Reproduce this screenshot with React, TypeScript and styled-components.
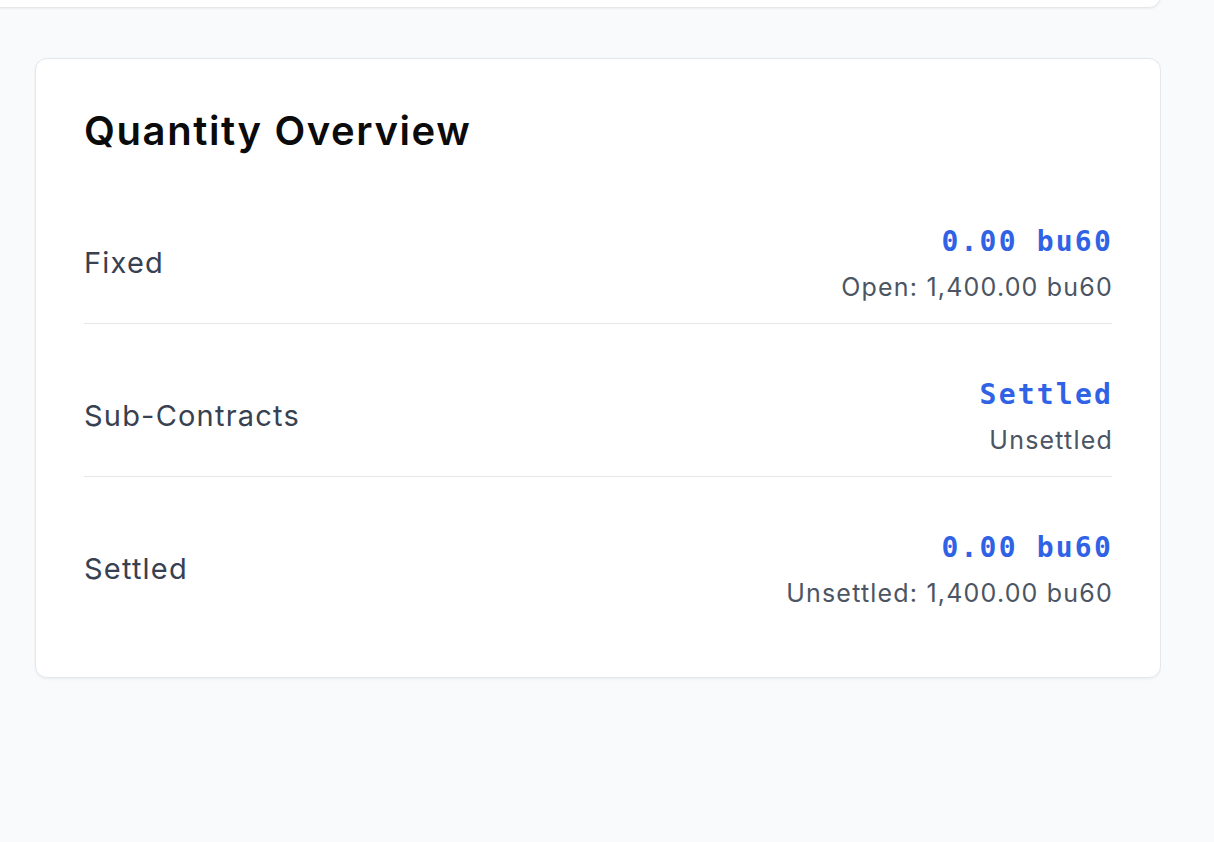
import React from 'react';
import styled, { createGlobalStyle } from 'styled-components';

const GlobalStyle = createGlobalStyle`
  html, body {
    margin: 0;
    padding: 0;
    background: #f9fafb;
  }
  body {
    font-family: Inter, "Noto Sans", "Liberation Sans", sans-serif;
    -webkit-font-smoothing: antialiased;
  }
`;

type Row = {
  label: string;
  value: string;
  sub: string;
};

const rows: Row[] = [
  { label: 'Fixed', value: '0.00 bu60', sub: 'Open: 1,400.00 bu60' },
  { label: 'Sub-Contracts', value: 'Settled', sub: 'Unsettled' },
  { label: 'Settled', value: '0.00 bu60', sub: 'Unsettled: 1,400.00 bu60' },
];

const Page = styled.div`
  min-height: 842px;
  padding: 0 0 0 35px;
  width: 1126px;
  box-sizing: content-box;
  overflow: hidden;
`;

const PrevCard = styled.div`
  height: 40px;
  margin: -34px 0 0 -80px;
  background: #ffffff;
  border: 1px solid #e5e7eb;
  border-radius: 12px;
  box-shadow: 0 1px 2px rgba(0, 0, 0, 0.05);
`;

const Card = styled.section`
  margin-top: 50px;
  background: #ffffff;
  border: 1px solid #e5e7eb;
  border-radius: 12px;
  box-shadow: 0 1px 3px rgba(0, 0, 0, 0.06);
  padding: 48px;
`;

const Title = styled.h2`
  margin: 0 0 48px;
  font-size: 40px;
  line-height: 48px;
  font-weight: 600;
  color: #0b0b0c;
  letter-spacing: 1.6px;
`;

const List = styled.div`
  display: flex;
  flex-direction: column;
  gap: 32px;
`;

const Item = styled.div<{ $last?: boolean }>`
  display: flex;
  align-items: center;
  justify-content: space-between;
  padding: 18px 0;
  border-bottom: ${(p) => (p.$last ? 'none' : '1px solid #e5e7eb')};
`;

const Label = styled.span`
  font-size: 29px;
  line-height: 40px;
  letter-spacing: 1.2px;
  color: #374151;
`;

const Values = styled.div`
  display: flex;
  flex-direction: column;
  align-items: flex-end;
`;

const Amount = styled.span`
  font-family: "DejaVu Sans Mono", "Liberation Mono", monospace;
  font-weight: 700;
  font-size: 28px;
  line-height: 42px;
  letter-spacing: 2.2px;
  margin-right: -1px;
  color: #3062e6;
`;

const Sub = styled.span`
  margin-top: 6px;
  font-size: 25px;
  line-height: 36px;
  letter-spacing: 1.2px;
  margin-right: -1px;
  color: #4b5563;
`;

export default function App() {
  return (
    <>
      <GlobalStyle />
      <Page>
        <PrevCard />
        <Card>
          <Title>Quantity Overview</Title>
          <List>
            {rows.map((row, i) => (
              <Item key={row.label} $last={i === rows.length - 1}>
                <Label>{row.label}</Label>
                <Values>
                  <Amount>{row.value}</Amount>
                  <Sub>{row.sub}</Sub>
                </Values>
              </Item>
            ))}
          </List>
        </Card>
      </Page>
    </>
  );
}
